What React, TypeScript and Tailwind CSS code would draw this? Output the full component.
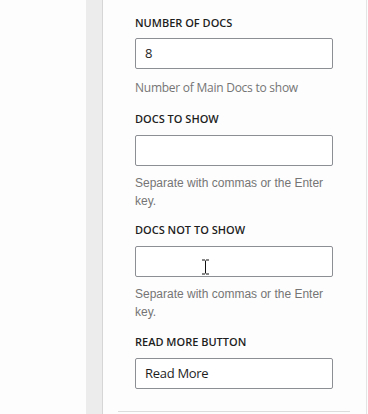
import React from "react";

const label = "text-[11px] leading-[16px] font-semibold text-[#1e1e1e]";
const input = "block w-[198px] h-[31px] border border-[#8c8f94] rounded-[2px] bg-white px-[9px] text-[13px] text-[#1e1e1e]";
const help = "w-[200px] text-[12px] leading-[18px] text-[#757575]";

export default function App() {
  return (
    <div className="relative flex h-[414px] w-[368px] overflow-hidden bg-white" style={{ fontFamily: "'Open Sans', 'Noto Sans', sans-serif" }}>
      <div className="w-[86px] bg-[#fdfdfd]" />
      <div className="w-[16px] bg-[#ececec]" />
      <div className="w-px bg-[#d6d6d6]" />
      <div className="flex w-[263px] flex-col bg-[#fdfdfd]">
        <div className="flex flex-1 flex-col pl-[32px] pt-[15px]">
          <div className={label} style={{ fontWeight: 550 }}>NUMBER OF DOCS</div>
          <div className={`${input} mt-[7px] flex items-center`}>8</div>
          <div className={`${help} mt-[10px] tracking-[-0.25px]`}>Number of Main Docs to show</div>

          <div className={`${label} mt-[14px]`} style={{ fontWeight: 550 }}>DOCS TO SHOW</div>
          <div className={`${input} mt-[8px]`} />
          <div className={`${help} mt-[8px]`} style={{ fontFamily: "'Liberation Sans', Arial, sans-serif" }}>
            Separate with commas or the Enter key.
          </div>

          <div className={`${label} mt-[12px]`} style={{ fontWeight: 550 }}>DOCS NOT TO SHOW</div>
          <div className={`${input} mt-[8px]`} />
          <div className={`${help} mt-[8px]`} style={{ fontFamily: "'Liberation Sans', Arial, sans-serif" }}>
            Separate with commas or the Enter key.
          </div>

          <div className={`${label} mt-[13px]`} style={{ fontWeight: 550 }}>READ MORE BUTTON</div>
          <div className={`${input} mt-[8px] flex items-center tracking-[-0.3px]`}>Read More</div>
        </div>
        <div className="ml-[15px] mr-[16px] mb-[2px] h-px bg-[#dcdcdc]" />
      </div>
      <div className="w-[1px] bg-[#e4e4e4]" />
      <div className="flex-1 bg-[#fdfdfd]" />
      <svg className="absolute left-[201px] top-[259px]" width="9" height="16" viewBox="0 0 9 16">
        <path d="M1 1h3M5 1h3M4.5 1.5v13M1 15h3M5 15h3" stroke="#fff" strokeWidth="3" fill="none" />
        <path d="M1 1h3M5 1h3M4.5 1.5v13M1 15h3M5 15h3" stroke="#111" strokeWidth="1" fill="none" />
      </svg>
    </div>
  );
}
